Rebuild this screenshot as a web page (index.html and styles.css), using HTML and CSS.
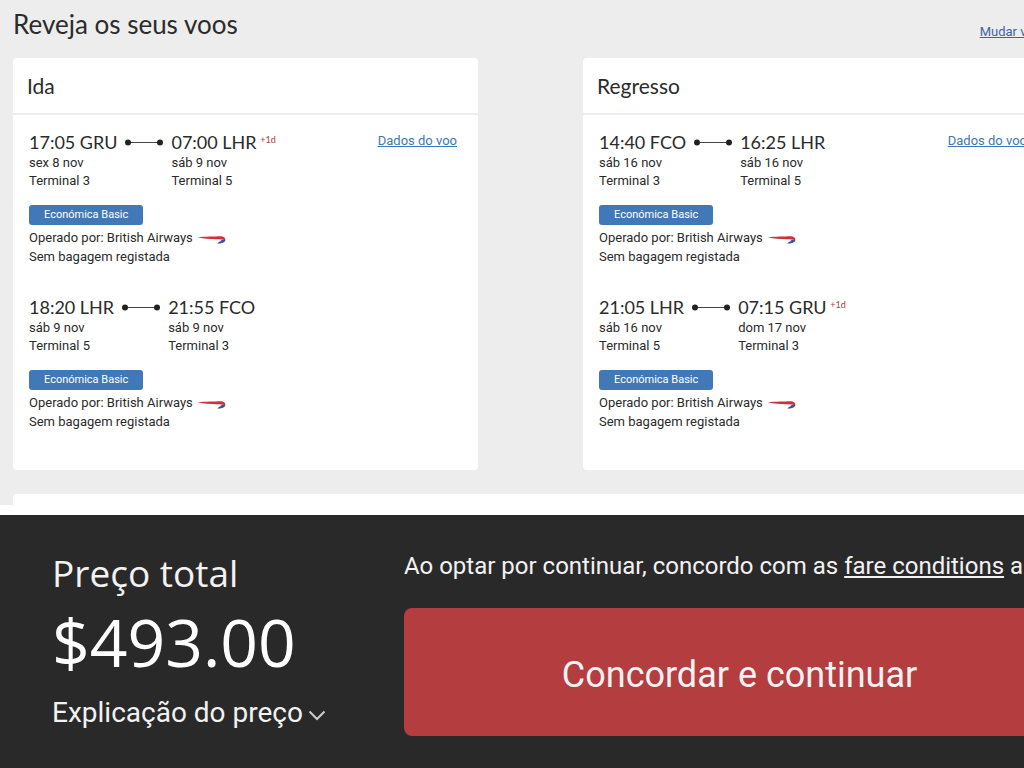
FILE: index.html
```
<!DOCTYPE html>
<html lang="pt">
<head>
  <meta charset="utf-8">
  <title>Reveja os seus voos</title>
  <link rel="stylesheet" href="styles.css">
</head>
<body>
  <svg class="defs" width="0" height="0" aria-hidden="true">
    <symbol id="route" viewBox="0 0 38 8">
      <path d="M3 4.500h32" stroke="#444" stroke-width="1"/>
      <circle cx="3" cy="4.500" r="3" fill="#222"/>
      <circle cx="35" cy="4.500" r="3" fill="#222"/>
    </symbol>
    <symbol id="ribbon" viewBox="0 0 28 8">
      <path d="M0 1.400C7 .4 17 .7 22 .3c4 0 5.700 1.700 5.200 4.100C25 3.600 22 3.500 18.500 3.300 12 3 6 2.400 0 1.400z" fill="#d0303c"/>
      <path d="M27.300 3.800c.2 2.500-3.500 3.900-8 3.900 1.300-1.600 2.800-2.200 4.500-2.600l-1.700-.8c1.500-.5 3.400-.7 5.200-.5z" fill="#35539b"/>
    </symbol>
  </svg>

  <main class="review">
    <header class="review-head">
      <h1>Reveja os seus voos</h1>
      <a href="#">Mudar voos</a>
    </header>

    <div class="cards">
      <section class="card">
        <h2>Ida</h2>
        <div class="card-body">
          <a class="details" href="#">Dados do voo</a>
          <article class="leg">
            <div class="route">
              <div>
                <div class="time">17:05 GRU</div>
                <p>sex 8 nov</p>
                <p>Terminal 3</p>
              </div>
              <svg class="connector"><use href="#route"/></svg>
              <div>
                <div class="time">07:00 LHR <sup>+1d</sup></div>
                <p>sáb 9 nov</p>
                <p>Terminal 5</p>
              </div>
            </div>
            <span class="fare">Económica Basic</span>
            <p class="info">Operado por: British Airways <svg class="ribbon"><use href="#ribbon"/></svg></p>
            <p class="info">Sem bagagem registada</p>
          </article>
          <article class="leg">
            <div class="route">
              <div>
                <div class="time">18:20 LHR</div>
                <p>sáb 9 nov</p>
                <p>Terminal 5</p>
              </div>
              <svg class="connector"><use href="#route"/></svg>
              <div>
                <div class="time">21:55 FCO</div>
                <p>sáb 9 nov</p>
                <p>Terminal 3</p>
              </div>
            </div>
            <span class="fare">Económica Basic</span>
            <p class="info">Operado por: British Airways <svg class="ribbon"><use href="#ribbon"/></svg></p>
            <p class="info">Sem bagagem registada</p>
          </article>
        </div>
      </section>

      <section class="card">
        <h2>Regresso</h2>
        <div class="card-body">
          <a class="details" href="#">Dados do voo</a>
          <article class="leg">
            <div class="route">
              <div>
                <div class="time">14:40 FCO</div>
                <p>sáb 16 nov</p>
                <p>Terminal 3</p>
              </div>
              <svg class="connector"><use href="#route"/></svg>
              <div>
                <div class="time">16:25 LHR</div>
                <p>sáb 16 nov</p>
                <p>Terminal 5</p>
              </div>
            </div>
            <span class="fare">Económica Basic</span>
            <p class="info">Operado por: British Airways <svg class="ribbon"><use href="#ribbon"/></svg></p>
            <p class="info">Sem bagagem registada</p>
          </article>
          <article class="leg">
            <div class="route">
              <div>
                <div class="time">21:05 LHR</div>
                <p>sáb 16 nov</p>
                <p>Terminal 5</p>
              </div>
              <svg class="connector"><use href="#route"/></svg>
              <div>
                <div class="time">07:15 GRU <sup>+1d</sup></div>
                <p>dom 17 nov</p>
                <p>Terminal 3</p>
              </div>
            </div>
            <span class="fare">Económica Basic</span>
            <p class="info">Operado por: British Airways <svg class="ribbon"><use href="#ribbon"/></svg></p>
            <p class="info">Sem bagagem registada</p>
          </article>
        </div>
      </section>
    </div>

    <div class="next-panel"></div>
  </main>

  <footer class="checkout">
    <div class="price">
      <div class="price-label">Preço total</div>
      <div class="amount">$493.00</div>
      <button type="button" class="explain">Explicação do preço
        <svg width="18" height="12" viewBox="0 0 18 12" fill="none" stroke="#ccc" stroke-width="2"><path d="M1.500 1.500L9 9l7.500-7.500"/></svg>
      </button>
    </div>
    <div class="agree">
      <p>Ao optar por continuar, concordo com as <a href="#">fare conditions</a> abaixo</p>
      <button type="button" class="continue">Concordar e continuar</button>
    </div>
  </footer>
</body>
</html>
```
FILE: styles.css
```
* {
  box-sizing: border-box;
}
body {
  margin: 0;
  font-family: Roboto, "Liberation Sans", sans-serif;
  font-size: 13px;
  color: #2b2b2b;
  background: #fff;
  overflow-x: hidden;
}
h1, h2, p {
  margin: 0;
  font-weight: 400;
}
a {
  color: #3c78b4;
}
.defs {
  position: absolute;
}

/* review area runs a little past the right edge */
.review {
  background: #ededed;
  padding-left: 13px;
  margin-right: -24px;
}
.review-head {
  display: flex;
  justify-content: space-between;
  height: 58px;
}
.review-head h1 {
  font-family: Lato, sans-serif;
  font-size: 26px;
  line-height: 48px;
}
.review-head a {
  color: #3f62a5;
  line-height: 64px;
}
.cards {
  display: grid;
  grid-template-columns: 1fr 1fr;
  column-gap: 105px;
  margin-bottom: 24px;
}
.card {
  background: #fff;
  border-radius: 4px;
}
.card h2 {
  font-family: Lato, sans-serif;
  font-size: 21px;
  line-height: 55px;
  padding-left: 14px;
  border-bottom: 2px solid #ededed;
}
.card-body {
  padding: 15px 21px 39px 16px;
}
.details {
  float: right;
  line-height: 22px;
}
.leg + .leg {
  margin-top: 29px;
}
.route {
  display: flex;
  gap: 8px;
  line-height: 18px;
  margin-bottom: 15px;
}
.time {
  font-family: Lato, sans-serif;
  font-size: 18px;
  line-height: 24px;
  white-space: nowrap;
}
.time sup {
  font-size: 9px;
  line-height: 10px;
  color: #b33a3e;
  margin-left: -1px;
  vertical-align: 6px;
}
.connector {
  width: 38px;
  height: 8px;
  margin-top: 8px;
}
.fare {
  display: block;
  width: max-content;
  padding: 0 15px;
  margin-bottom: 3px;
  border-radius: 3px;
  background: #4178b8;
  color: #fff;
  font-size: 11px;
  line-height: 20px;
}
.info {
  line-height: 19px;
}
.ribbon {
  width: 28px;
  height: 8px;
  margin-left: 2px;
  vertical-align: -2px;
}
.next-panel {
  height: 11px;
  background: #fff;
  border-radius: 4px 0 0 0;
}

.checkout {
  display: flex;
  margin-top: 10px;
  margin-right: -51px;
  min-height: 253px;
  padding: 36px 0 32px 52px;
  background: #292929;
  color: #f2f2f2;
}
.checkout button {
  border: 0;
  font-family: inherit;
  color: inherit;
  cursor: pointer;
}
.price {
  flex: 0 0 352px;
}
.price-label {
  font-family: "Open Sans", sans-serif;
  font-size: 37px;
  line-height: 44px;
}
.amount {
  font-family: "Open Sans", sans-serif;
  font-size: 66px;
  line-height: 92px;
  color: #fff;
}
.explain {
  display: flex;
  align-items: center;
  gap: 5px;
  padding: 0;
  background: none;
  font-size: 28px;
  line-height: 52px;
}
.explain svg {
  margin-top: 6px;
}
.agree {
  flex: 1;
  min-width: 0;
}
.agree p {
  font-size: 24px;
  line-height: 30px;
  margin-bottom: 27px;
  white-space: nowrap;
}
.agree a {
  color: inherit;
}
.continue {
  display: block;
  width: 100%;
  height: 128px;
  padding: 6px 0 0;
  border-radius: 8px;
  background: #b43d3f;
  font-size: 36px;
}
```
